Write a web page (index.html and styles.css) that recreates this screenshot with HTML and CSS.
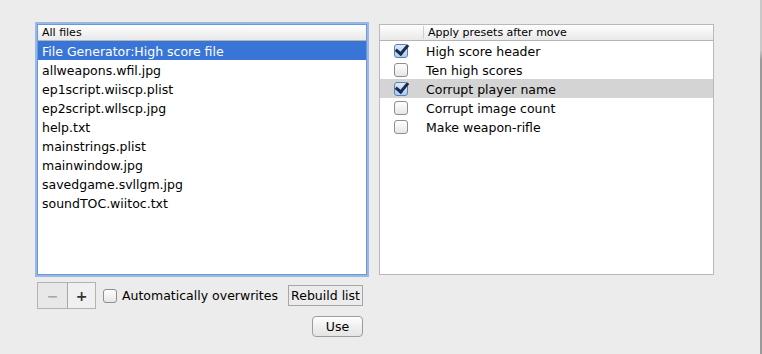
FILE: index.html
```html
<!DOCTYPE html>
<html lang="en">

<head>
    <meta charset="UTF-8">
    <title>File presets</title>
    <link rel="stylesheet" href="styles.css">
</head>

<body>
    <div class="window">
        <div class="content">
            <div class="left">
                <div class="files">
                    <div class="head"><span class="head-label">All files</span></div>
                    <ul class="file-list">
                        <li class="selected">File Generator:High score file</li>
                        <li>allweapons.wfil.jpg</li>
                        <li>ep1script.wiiscp.plist</li>
                        <li>ep2script.wllscp.jpg</li>
                        <li>help.txt</li>
                        <li>mainstrings.plist</li>
                        <li>mainwindow.jpg</li>
                        <li>savedgame.svllgm.jpg</li>
                        <li>soundTOC.wiitoc.txt</li>
                    </ul>
                </div>
                <div class="controls">
                    <div class="segmented">
                        <button class="seg-btn" disabled>&minus;</button>
                        <button class="seg-btn">+</button>
                    </div>
                    <label class="check-label"><span class="checkbox"></span>Automatically overwrites</label>
                    <button class="rebuild">Rebuild list</button>
                </div>
                <div class="actions">
                    <button class="use">Use</button>
                </div>
            </div>
            <div class="presets">
                <div class="head">
                    <span class="col-check"></span>
                    <span class="head-label">Apply presets after move</span>
                </div>
                <ul class="preset-list">
                    <li><span class="checkbox checked"></span>High score header</li>
                    <li><span class="checkbox"></span>Ten high scores</li>
                    <li class="highlight"><span class="checkbox checked"></span>Corrupt player name</li>
                    <li><span class="checkbox"></span>Corrupt image count</li>
                    <li><span class="checkbox"></span>Make weapon-rifle</li>
                </ul>
            </div>
        </div>
        <div class="edge"></div>
    </div>
</body>

</html>
```

FILE: styles.css
```css
body {
    margin: 0;
    background: #ececec;
    font-family: "DejaVu Sans", sans-serif;
    font-size: 12.5px;
    color: #000;
}

.window {
    display: flex;
    height: 354px;
}

.content {
    flex: 1;
    display: flex;
    align-items: flex-start;
    gap: 12px;
    padding: 24px 0 0 37px;
}

.left {
    width: 330px;
}

.files {
    height: 249px;
    background: white;
    border: 1px solid #6b98d6;
    box-shadow: 0 0 0 2px rgba(125, 168, 226, 0.75);
}

.head {
    height: 15px;
    display: flex;
    align-items: center;
    background: linear-gradient(#ffffff, #f3f3f3 50%, #e9e9e9);
    border-bottom: 1px solid #b4b4b4;
    font-size: 11px;
}

.head-label {
    padding-left: 4px;
}

.file-list,
.preset-list {
    list-style: none;
    margin: 0;
    padding: 0;
}

.file-list li {
    height: 18px;
    padding-top: 1px;
    line-height: 19px;
    padding-left: 4px;
    white-space: nowrap;
}

.file-list li.selected {
    background: #3875d7;
    color: white;
}

.presets {
    width: 333px;
    height: 249px;
    background: white;
    border: 1px solid #b9b9b9;
}

.col-check {
    width: 43px;
    height: 13px;
    border-right: 1px solid #cfcfcf;
}

.preset-list li {
    height: 18px;
    padding-top: 1px;
    display: flex;
    align-items: center;
    padding-left: 14px;
}

.preset-list li.highlight {
    background: #d4d4d4;
}

.checkbox {
    width: 12px;
    height: 12px;
    border: 1px solid #8e8e8e;
    border-radius: 3px;
    background: linear-gradient(#ffffff, #e6e6e6);
    margin-right: 18px;
    position: relative;
    flex: none;
}

.preset-list .checkbox {
    margin-top: -1px;
}

.checkbox.checked {
    background: linear-gradient(#dcecfc, #a9cdf3);
    border-color: #5b7fae;
}

.checkbox.checked::after {
    content: "";
    position: absolute;
    left: 3px;
    top: -3px;
    width: 5px;
    height: 10px;
    border-right: 3px solid #1d2a4a;
    border-bottom: 3px solid #1d2a4a;
    transform: rotate(40deg);
}

.controls {
    display: flex;
    align-items: center;
    margin-top: 7px;
    padding-right: 4px;
}

.segmented {
    display: flex;
    border: 1px solid #b3b3b3;
}

.seg-btn {
    width: 29px;
    height: 25px;
    border: none;
    background: #ececec;
    font-family: "DejaVu Sans", sans-serif;
    font-size: 14px;
    font-weight: bold;
    color: #333;
    padding: 0;
}

.seg-btn + .seg-btn {
    width: 28px;
    border-left: 1px solid #a8a8a8;
    background: #f0f0f0;
}

.seg-btn:disabled {
    color: #a6a6a6;
    background: #e8e8e8;
}

.check-label {
    display: flex;
    align-items: center;
    margin-left: 7px;
}

.check-label .checkbox {
    margin-right: 5px;
}

.rebuild {
    margin-left: auto;
    height: 21px;
    padding: 0 2px;
    border: 1px solid #a6a6a6;
    background: #ececec;
    font-family: "DejaVu Sans", sans-serif;
    font-size: 12.5px;
    color: #000;
}

.actions {
    display: flex;
    justify-content: flex-end;
    margin-top: 7px;
    padding-right: 4px;
}

.use {
    width: 51px;
    height: 21px;
    border: 1px solid #9d9d9d;
    border-radius: 4px;
    background: linear-gradient(#ffffff, #f0f0f0 50%, #e4e4e4);
    font-family: "DejaVu Sans", sans-serif;
    font-size: 12.5px;
    color: #000;
    padding: 0;
}

.edge {
    width: 2px;
    background: linear-gradient(#c8c8c8 0, #c8c8c8 50px, #9a9a9a 60px, #9a9a9a);
}
```
